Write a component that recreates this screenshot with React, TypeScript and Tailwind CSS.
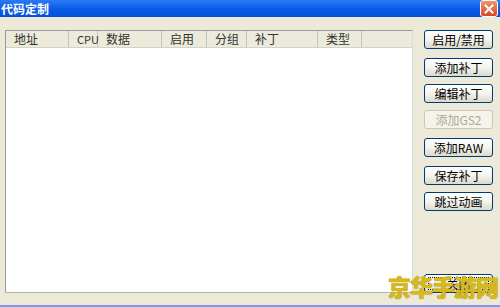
import React from 'react';

const columns = [
    { label: '地址', w: 'w-[63px]' },
    { label: 'CPU', w: 'w-[29px]' },
    { label: '数据', w: 'w-[64px]' },
    { label: '启用', w: 'w-[45px]' },
    { label: '分组', w: 'w-[40px]' },
    { label: '补丁', w: 'w-[71px]' },
    { label: '类型', w: 'w-[44px]' },
];

function XpButton({ label, disabled, focused, className = '' }: { label: string; disabled?: boolean; focused?: boolean; className?: string }) {
    return (
        <button
            className={`h-[19px] w-[69px] rounded-[3px] border text-[12px] leading-none flex items-center justify-center ${
                disabled
                    ? 'border-[#c9c7ba] bg-[#f5f4ea] text-[#aca899]'
                    : 'border-[#003c74] bg-gradient-to-b from-white via-[#f4f3ee] to-[#dcd9cc] text-black'
            } ${className}`}
        >
            {focused ? (
                <span className="flex h-[13px] w-[61px] items-center justify-center border border-dotted border-black">{label}</span>
            ) : (
                label
            )}
        </button>
    );
}

export default function App() {
    return (
        <div
            className="relative flex h-[307px] w-[500px] flex-col overflow-hidden bg-[#ece9d8]"
            style={{ fontFamily: '"Noto Sans CJK SC", "DejaVu Sans", sans-serif' }}
        >
            {/* title bar */}
            <div className="flex h-[17px] items-center justify-between bg-gradient-to-b from-[#2b7bf6] via-[#0a5ce8] to-[#0650d8] pl-[1px] pr-[2px]">
                <span className="text-[12px] font-bold leading-none text-white">代码定制</span>
                <div className="flex h-[17px] w-[18px] items-center justify-center rounded-[3px] border border-white bg-gradient-to-b from-[#f0936d] to-[#d9441c]">
                    <svg width="10" height="10" viewBox="0 0 10 10">
                        <path d="M1.5 1.5L8.5 8.5M8.5 1.5L1.5 8.5" stroke="white" strokeWidth="2" strokeLinecap="square" />
                    </svg>
                </div>
            </div>

            {/* body */}
            <div className="flex flex-1 pl-[5px] pt-[13px] pb-[12px]">
                <div className="flex h-[263px] w-[408px] flex-col border border-[#9a9a9a] border-r-[#e0ded2] border-b-[#b7b4a6] bg-white">
                    <div className="flex h-[17px] border-b border-[#d6d3c4] bg-[#ebeadb]">
                        {columns.map((c) => (
                            <div
                                key={c.label}
                                className={`${c.w} flex items-center border-r border-[#c7c5b2] pl-[8px] text-[12px] leading-none text-[#333]`}
                            >
                                {c.label === 'CPU' ? <span className="text-[11px]">CPU</span> : c.label}
                            </div>
                        ))}
                        <div className="flex-1" />
                    </div>
                    <div className="flex-1" />
                </div>

                <div className="ml-[11px] flex h-[263px] flex-col">
                    <XpButton label="启用/禁用" />
                    <XpButton label="添加补丁" className="mt-[9px]" />
                    <XpButton label="编辑补丁" className="mt-[7px]" />
                    <XpButton label="添加GS2" disabled className="mt-[7px]" />
                    <XpButton label="添加RAW" className="mt-[9px]" />
                    <XpButton label="保存补丁" className="mt-[9px]" />
                    <XpButton label="跳过动画" className="mt-[7px]" />
                    <XpButton label="关闭" focused className="mt-auto" />
                </div>
            </div>

            {/* bottom window border */}
            <div className="h-[3px] bg-[#7a9be8]" />

            {/* watermark */}
            <div
                className="absolute left-[388px] top-[275px] text-[23px] font-black leading-none tracking-[-1px] text-[#d8b91a]"
                style={{ textShadow: '0 0 1px #8a7410' }}
            >
                京华手游网
            </div>
        </div>
    );
}
